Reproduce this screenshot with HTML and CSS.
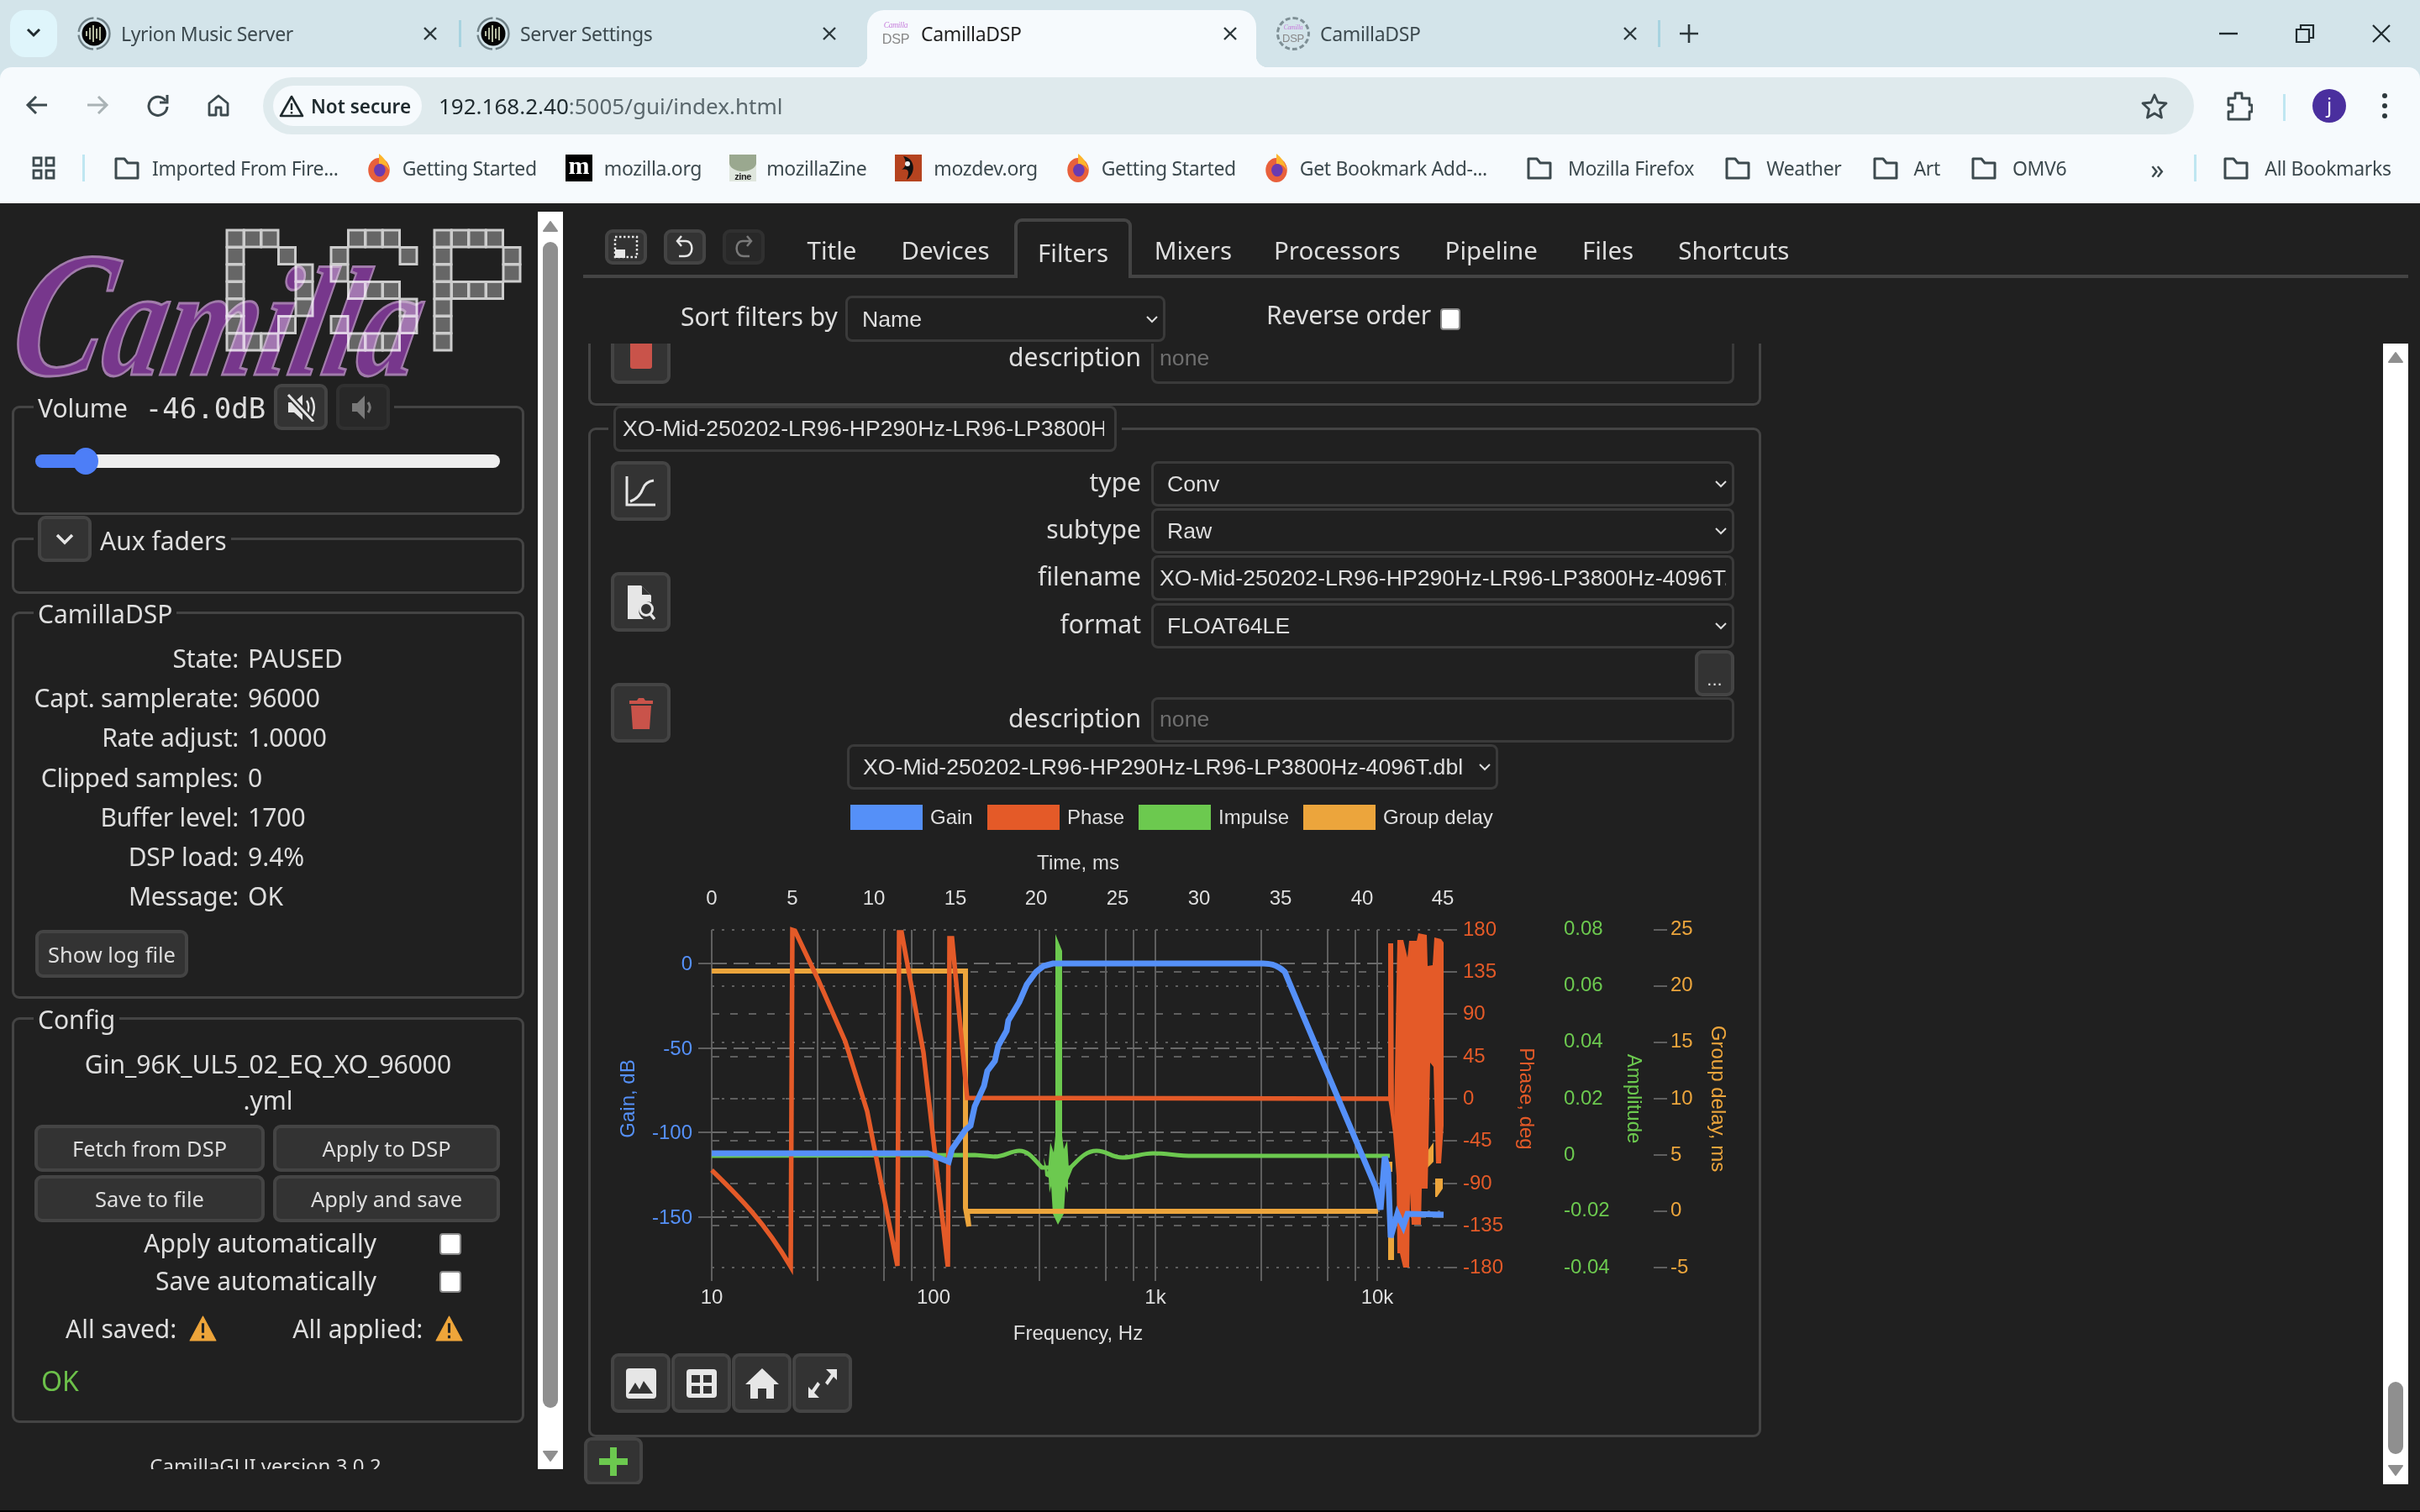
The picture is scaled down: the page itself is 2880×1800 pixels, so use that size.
FILE: index.html
```html
<!DOCTYPE html>
<html lang="en">
<head>
  <meta charset="UTF-8">
  <title>CamillaDSP</title>
  <link rel="stylesheet" href="styles.css">
</head>
<body>
  <svg class="defs" width="0" height="0">
    <symbol id="i-folder" viewBox="0 0 32 32"><path d="M3 5h10l4 5h12v18H3z" fill="none" stroke="#3d4a4f" stroke-width="3" stroke-linejoin="round"/></symbol>
    <symbol id="i-close" viewBox="0 0 20 20"><path d="M3 3l14 14M17 3L3 17" stroke="#2d383c" stroke-width="2.4"/></symbol>
    <symbol id="i-lyrion" viewBox="0 0 40 40"><circle cx="20" cy="20" r="18.5" fill="none" stroke="#6f8086" stroke-width="2.4" stroke-dasharray="26 4"/><circle cx="20" cy="20" r="14.5" fill="#050505"/><path d="M11 17v6M15 13v14M19 10v20M23 14v12M27 12v16" stroke="#dfe8c8" stroke-width="1.6"/></symbol>
    <symbol id="i-firefox" viewBox="0 0 32 40"><ellipse cx="16" cy="23" rx="15" ry="17" fill="#e8603c"/><path d="M16 0c8 6 13 14 15 24-4-8-10-10-15-10z" fill="#fdb52c"/><ellipse cx="17" cy="23" rx="8" ry="9" fill="#6a3bb0"/></symbol>
  </svg>

  <header class="chrome">
    <div class="tabstrip">
      <button class="tab-search"><svg width="18" height="12" viewBox="0 0 18 12"><path d="M2 2l7 7 7-7" fill="none" stroke="#1f2a2e" stroke-width="3"/></svg></button>
      <div class="tab">
        <svg class="fav" width="40" height="40"><use href="#i-lyrion"/></svg>
        <span class="tab-title">Lyrion Music Server</span>
        <svg class="tab-close" width="20" height="20"><use href="#i-close"/></svg>
      </div>
      <div class="tab tab-sep">
        <svg class="fav" width="40" height="40"><use href="#i-lyrion"/></svg>
        <span class="tab-title">Server Settings</span>
        <svg class="tab-close" width="20" height="20"><use href="#i-close"/></svg>
      </div>
      <div class="tab active">
        <svg class="fav" width="36" height="40" viewBox="0 0 34 42"><text x="17" y="14" text-anchor="middle" class="fav-top">Camilla</text><text x="17" y="34" text-anchor="middle" class="fav-bottom">DSP</text></svg>
        <span class="tab-title">CamillaDSP</span>
        <svg class="tab-close" width="20" height="20"><use href="#i-close"/></svg>
      </div>
      <div class="tab">
        <span class="fav fav-ring"><svg width="26" height="34" viewBox="0 0 34 42"><text x="17" y="14" text-anchor="middle" class="fav-top">Camilla</text><text x="17" y="34" text-anchor="middle" class="fav-bottom">DSP</text></svg></span>
        <span class="tab-title">CamillaDSP</span>
        <svg class="tab-close" width="20" height="20"><use href="#i-close"/></svg>
      </div>
      <span class="strip-sep"></span>
      <svg class="new-tab" width="26" height="26" viewBox="0 0 26 26"><path d="M13 2v22M2 13h22" stroke="#2d383c" stroke-width="2.6"/></svg>
      <div class="window-controls">
        <svg width="24" height="24" viewBox="0 0 24 24"><path d="M1 12h22" stroke="#1f2a2e" stroke-width="2.4"/></svg>
        <svg width="24" height="24" viewBox="0 0 24 24"><path d="M2 7h15v15H2zM7 7V2h15v15h-5" fill="none" stroke="#1f2a2e" stroke-width="2.2"/></svg>
        <svg width="24" height="24" viewBox="0 0 24 24"><path d="M2 2l20 20M22 2L2 22" stroke="#1f2a2e" stroke-width="2.2"/></svg>
      </div>
    </div>

    <div class="toolbar">
      <svg class="tool" width="28" height="28" viewBox="0 0 28 28"><path d="M26 14H3M13 4L3 14l10 10" fill="none" stroke="#3d4a4f" stroke-width="3"/></svg>
      <svg class="tool" width="28" height="28" viewBox="0 0 28 28"><path d="M2 14h23M15 4l10 10-10 10" fill="none" stroke="#a9b2b5" stroke-width="3"/></svg>
      <svg class="tool" width="28" height="28" viewBox="0 0 28 28"><path d="M23 9a11 11 0 1 0 2 7" fill="none" stroke="#3d4a4f" stroke-width="3"/><path d="M25 2v9h-9" fill="none" stroke="#3d4a4f" stroke-width="3"/></svg>
      <svg class="tool" width="28" height="28" viewBox="0 0 28 28"><path d="M3 12L14 3l11 9v14h-8v-9h-6v9H3z" fill="none" stroke="#3d4a4f" stroke-width="2.8" stroke-linejoin="round"/></svg>
      <div class="omnibox">
        <span class="chip">
          <svg width="30" height="28" viewBox="0 0 30 28"><path d="M15 3l13 23H2z" fill="none" stroke="#1f2a2e" stroke-width="2.6" stroke-linejoin="round"/><path d="M15 11v8M15 21v2.4" stroke="#1f2a2e" stroke-width="2.4"/></svg>
          <b>Not secure</b>
        </span>
        <span class="url"><span class="host">192.168.2.40</span>:5005/gui/index.html</span>
        <svg class="star" width="32" height="32" viewBox="0 0 32 32"><path d="M16 3l4 9 10 1-7.5 7 2 10-8.5-5-8.5 5 2-10L2 13l10-1z" fill="none" stroke="#3d4a4f" stroke-width="2.8" stroke-linejoin="round"/></svg>
      </div>
      <svg class="ext" width="32" height="36" viewBox="0 0 32 36"><path d="M3 9h8V3h8v6h9v8h3v8h-3v9H3v-9h5v-8H3z" fill="none" stroke="#3d4a4f" stroke-width="2.8" stroke-linejoin="round"/></svg>
      <span class="tool-sep"></span>
      <span class="avatar">j</span>
      <svg class="menu" width="8" height="32" viewBox="0 0 8 32"><circle cx="4" cy="4" r="3"/><circle cx="4" cy="16" r="3"/><circle cx="4" cy="28" r="3"/></svg>
    </div>

    <div class="bookmarks">
      <svg class="apps" width="28" height="28" viewBox="0 0 28 28"><path d="M2 2h9v9H2zM17 2h9v9h-9zM2 17h9v9H2zM17 17h9v9h-9z" fill="none" stroke="#3d4a4f" stroke-width="2.8"/></svg>
      <span class="tool-sep bm-sep"></span>
      <span class="bm"><svg width="32" height="32"><use href="#i-folder"/></svg>Imported From Fire...</span>
      <span class="bm"><svg width="28" height="34"><use href="#i-firefox"/></svg>Getting Started</span>
      <span class="bm bm-moz"><span class="fav-moz">m</span>mozilla.org</span>
      <span class="bm bm-zine"><span class="fav-zine"><i></i>zine</span>mozillaZine</span>
      <span class="bm"><svg width="32" height="32" viewBox="0 0 32 32"><rect width="32" height="32" fill="#b5431f"/><path d="M10 2c14 2 16 20 4 28 4-10 2-14-6-12 6-4 6-10 2-16z" fill="#111"/><circle cx="15" cy="11" r="3" fill="#eee"/></svg>mozdev.org</span>
      <span class="bm"><svg width="28" height="34"><use href="#i-firefox"/></svg>Getting Started</span>
      <span class="bm bm-addons"><svg width="28" height="34"><use href="#i-firefox"/></svg>Get Bookmark Add-...</span>
      <span class="bm bm-folder"><svg width="32" height="32"><use href="#i-folder"/></svg>Mozilla Firefox</span>
      <span class="bm bm-folder"><svg width="32" height="32"><use href="#i-folder"/></svg>Weather</span>
      <span class="bm bm-folder"><svg width="32" height="32"><use href="#i-folder"/></svg>Art</span>
      <span class="bm bm-folder"><svg width="32" height="32"><use href="#i-folder"/></svg>OMV6</span>
      <span class="bm-more">»</span>
      <span class="tool-sep bm-sep2"></span>
      <span class="bm bm-folder"><svg width="32" height="32"><use href="#i-folder"/></svg>All Bookmarks</span>
    </div>
  </header>

  <div class="app">
    <aside class="sidebar">
      <div class="side-scroll">
        <svg class="logo" width="626" height="215" viewBox="0 242 626 215">
          <defs><rect id="cell" width="20" height="20" fill="#666" stroke="#ccc" stroke-width="3"/></defs>
          <g transform="translate(270 274)">
            <use href="#cell" x="0" y="0"/><use href="#cell" x="20.5" y="0"/><use href="#cell" x="41" y="0"/>
            <use href="#cell" x="0" y="20.5"/><use href="#cell" x="61.5" y="20.5"/>
            <use href="#cell" x="0" y="41"/><use href="#cell" x="82" y="41"/>
            <use href="#cell" x="0" y="61.5"/><use href="#cell" x="82" y="61.5"/>
            <use href="#cell" x="0" y="82"/><use href="#cell" x="82" y="82"/>
            <use href="#cell" x="0" y="102.5"/><use href="#cell" x="61.5" y="102.5"/>
            <use href="#cell" x="0" y="123"/><use href="#cell" x="20.5" y="123"/><use href="#cell" x="41" y="123"/>
          </g>
          <g transform="translate(394 274)">
            <use href="#cell" x="20.5" y="0"/><use href="#cell" x="41" y="0"/><use href="#cell" x="61.5" y="0"/>
            <use href="#cell" x="0" y="20.5"/><use href="#cell" x="82" y="20.5"/>
            <use href="#cell" x="0" y="41"/>
            <use href="#cell" x="20.5" y="61.5"/><use href="#cell" x="41" y="61.5"/><use href="#cell" x="61.5" y="61.5"/>
            <use href="#cell" x="82" y="82"/>
            <use href="#cell" x="0" y="102.5"/><use href="#cell" x="82" y="102.5"/>
            <use href="#cell" x="20.5" y="123"/><use href="#cell" x="41" y="123"/><use href="#cell" x="61.5" y="123"/>
          </g>
          <g transform="translate(517 274)">
            <use href="#cell" x="0" y="0"/><use href="#cell" x="20.5" y="0"/><use href="#cell" x="41" y="0"/><use href="#cell" x="61.5" y="0"/>
            <use href="#cell" x="0" y="20.5"/><use href="#cell" x="82" y="20.5"/>
            <use href="#cell" x="0" y="41"/><use href="#cell" x="82" y="41"/>
            <use href="#cell" x="0" y="61.5"/><use href="#cell" x="20.5" y="61.5"/><use href="#cell" x="41" y="61.5"/><use href="#cell" x="61.5" y="61.5"/>
            <use href="#cell" x="0" y="82"/>
            <use href="#cell" x="0" y="102.5"/>
            <use href="#cell" x="0" y="123"/>
          </g>
          <text class="logo-script" transform="translate(95 0) skewX(-12)" x="6" y="446" textLength="484" lengthAdjust="spacingAndGlyphs"><tspan class="logo-cap">C</tspan>amilla</text>
        </svg>

        <fieldset class="box box-volume">
          <legend class="legend-row">
            <span>Volume</span><span class="vol-value">-46.0dB</span>
            <button class="btn btn-icon-sm"><svg width="36" height="34" viewBox="0 0 36 34"><path d="M3 11h7l10-9v30L10 23H3z" fill="#e6e6e6"/><path d="M25 9c3 4 3 12 0 16M30 5c5 7 5 17 0 24" fill="none" stroke="#e6e6e6" stroke-width="2.5"/><path d="M4 3l28 30" stroke="#333" stroke-width="7"/><path d="M3 2l30 32" stroke="#e6e6e6" stroke-width="3"/></svg></button>
            <button class="btn btn-icon-sm btn-off"><svg width="30" height="32" viewBox="0 0 30 32"><path d="M2 11h6l9-9v28l-9-9H2z" fill="#e6e6e6"/><path d="M21 10c3 4 3 8 0 12" fill="none" stroke="#e6e6e6" stroke-width="3"/></svg></button>
          </legend>
          <input class="volume" type="range" min="-150" max="0" value="-137">
        </fieldset>

        <fieldset class="box box-aux">
          <legend class="legend-row">
            <button class="btn btn-icon-sm"><svg width="22" height="14" viewBox="0 0 22 14"><path d="M2 2l9 9 9-9" fill="none" stroke="#e6e6e6" stroke-width="3.5"/></svg></button>
            <span class="aux-label">Aux faders</span>
          </legend>
        </fieldset>

        <fieldset class="box box-status">
          <legend>CamillaDSP</legend>
          <div class="status-row"><span class="status-label">State:</span><span>PAUSED</span></div>
          <div class="status-row"><span class="status-label">Capt. samplerate:</span><span>96000</span></div>
          <div class="status-row"><span class="status-label">Rate adjust:</span><span>1.0000</span></div>
          <div class="status-row"><span class="status-label">Clipped samples:</span><span>0</span></div>
          <div class="status-row"><span class="status-label">Buffer level:</span><span>1700</span></div>
          <div class="status-row"><span class="status-label">DSP load:</span><span>9.4%</span></div>
          <div class="status-row"><span class="status-label">Message:</span><span>OK</span></div>
          <button class="btn btn-log">Show log file</button>
        </fieldset>

        <fieldset class="box box-config">
          <legend>Config</legend>
          <div class="config-name">Gin_96K_UL5_02_EQ_XO_96000<br>.yml</div>
          <div class="config-buttons">
            <button class="btn">Fetch from DSP</button>
            <button class="btn">Apply to DSP</button>
            <button class="btn">Save to file</button>
            <button class="btn">Apply and save</button>
          </div>
          <div class="auto-row"><span>Apply automatically</span><input type="checkbox"></div>
          <div class="auto-row"><span>Save automatically</span><input type="checkbox"></div>
          <div class="saved-row">
            <span>All saved:</span>
            <svg width="33" height="31" viewBox="0 0 32 30"><path d="M16 1L31 29H1z" fill="#eea53a" stroke="#eea53a" stroke-linejoin="round"/><path d="M16 9v11M16 23v3.5" stroke="#222" stroke-width="3"/></svg>
            <span class="saved-gap">All applied:</span>
            <svg width="33" height="31" viewBox="0 0 32 30"><path d="M16 1L31 29H1z" fill="#eea53a" stroke="#eea53a" stroke-linejoin="round"/><path d="M16 9v11M16 23v3.5" stroke="#222" stroke-width="3"/></svg>
          </div>
          <div class="config-ok">OK</div>
        </fieldset>

        <div class="version">CamillaGUI version 3.0.2</div>
      </div>
      <div class="scrollbar side-bar">
        <svg class="sb-up" width="18" height="14" viewBox="0 0 18 14"><path d="M9 2L1 13h16z" fill="#8f8f8f" stroke="#8f8f8f" stroke-width="2" stroke-linejoin="round"/></svg>
        <div class="sb-thumb side-thumb"></div>
        <svg class="sb-down" width="18" height="14" viewBox="0 0 18 14"><path d="M9 12L1 1h16z" fill="#8f8f8f" stroke="#8f8f8f" stroke-width="2" stroke-linejoin="round"/></svg>
      </div>
    </aside>

    <main class="main">
      <nav class="tabs">
        <button class="btn btn-tiny"><svg width="30" height="30" viewBox="0 0 30 30"><path d="M2 3h26v24H2z" fill="none" stroke="#e6e6e6" stroke-width="2.5" stroke-dasharray="2.5 2.5"/><path d="M2 18h12v10H2z" fill="#e6e6e6"/></svg></button>
        <button class="btn btn-tiny"><svg width="22" height="28" viewBox="0 0 22 28"><path d="M7 1L2 7l5 6" fill="none" stroke="#e6e6e6" stroke-width="2.5"/><path d="M3 7h9c10 0 10 18-1 18H4" fill="none" stroke="#e6e6e6" stroke-width="2.5"/></svg></button>
        <button class="btn btn-tiny btn-off"><svg width="22" height="28" viewBox="0 0 22 28"><path d="M15 1l5 6-5 6" fill="none" stroke="#e6e6e6" stroke-width="2.5"/><path d="M19 7h-9C0 7 0 25 11 25h7" fill="none" stroke="#e6e6e6" stroke-width="2.5"/></svg></button>
        <a class="tab-link tab-first">Title</a>
        <a class="tab-link">Devices</a>
        <a class="tab-link tab-current">Filters</a>
        <a class="tab-link">Mixers</a>
        <a class="tab-link">Processors</a>
        <a class="tab-link">Pipeline</a>
        <a class="tab-link">Files</a>
        <a class="tab-link">Shortcuts</a>
      </nav>

      <div class="sort-row">
        <span class="sort-label">Sort filters by</span>
        <select class="field sort-select"><option>Name</option></select>
        <span class="reverse-label">Reverse order</span>
        <input class="reverse-check" type="checkbox">
      </div>

      <div class="content">
        <div class="filter-list">
          <div class="filter-tail">
            <button class="btn btn-square tail-trash"><svg width="26" height="40" viewBox="0 0 26 40"><rect y="0" width="26" height="40" rx="3" fill="#c9534a"/></svg></button>
            <label class="row-label tail-label">description</label>
            <input class="field tail-input" placeholder="none">
          </div>

          <fieldset class="filter">
            <legend><input class="field filter-name" value="XO-Mid-250202-LR96-HP290Hz-LR96-LP3800Hz-4096T"></legend>
            <div class="filter-top">
              <div class="filter-tools">
                <button class="btn btn-square"><svg width="38" height="38" viewBox="0 0 38 38"><path d="M2 1v34h34" fill="none" stroke="#e6e6e6" stroke-width="3"/><path d="M6 31C14 28 18 24 21 16c2-6 6-9 13-10" fill="none" stroke="#e6e6e6" stroke-width="3"/></svg></button>
                <button class="btn btn-square"><svg width="34" height="42" viewBox="0 0 34 42"><path d="M1 1h16l12 12v8a11 11 0 0 0-9 20H1z" fill="#e6e6e6"/><path d="M18 2l10 10H18z" fill="#333"/><circle cx="23" cy="29" r="7.5" fill="none" stroke="#e6e6e6" stroke-width="3"/><path d="M28 35l5 6" stroke="#e6e6e6" stroke-width="3.5"/></svg></button>
                <button class="btn btn-square"><svg width="30" height="38" viewBox="0 0 30 38"><path d="M1 4h9l2-3h6l2 3h9v4H1zM3 10h24l-2 28H5z" fill="#c9534a"/></svg></button>
              </div>
              <div class="filter-form">
                <div class="row"><label class="row-label">type</label><select class="field"><option>Conv</option></select></div>
                <div class="row"><label class="row-label">subtype</label><select class="field"><option>Raw</option></select></div>
                <div class="row"><label class="row-label">filename</label><input class="field" value="XO-Mid-250202-LR96-HP290Hz-LR96-LP3800Hz-4096T.dbl"></div>
                <div class="row"><label class="row-label">format</label><select class="field"><option>FLOAT64LE</option></select></div>
                <div class="row row-more"><button class="btn btn-more">...</button></div>
                <div class="row"><label class="row-label">description</label><input class="field" placeholder="none"></div>
              </div>
            </div>

            <select class="field file-select"><option>XO-Mid-250202-LR96-HP290Hz-LR96-LP3800Hz-4096T.dbl</option></select>

            <svg class="chart" width="1370" height="660" viewBox="720 944 1370 660">
              <!-- legend -->
              <rect x="1012" y="958" width="86" height="30" fill="#5590f8"/><text x="1107" y="981">Gain</text>
              <rect x="1175" y="958" width="86" height="30" fill="#e45a28"/><text x="1270" y="981">Phase</text>
              <rect x="1355" y="958" width="86" height="30" fill="#6cc94f"/><text x="1450" y="981">Impulse</text>
              <rect x="1551" y="958" width="86" height="30" fill="#eca53c"/><text x="1646" y="981">Group delay</text>

              <text x="1283" y="1035" text-anchor="middle">Time, ms</text>
              <g text-anchor="middle">
                <text x="847" y="1077">0</text><text x="943" y="1077">5</text><text x="1040" y="1077">10</text><text x="1137" y="1077">15</text><text x="1233" y="1077">20</text>
                <text x="1330" y="1077">25</text><text x="1427" y="1077">30</text><text x="1524" y="1077">35</text><text x="1621" y="1077">40</text><text x="1717" y="1077">45</text>
                <text x="847" y="1552">10</text><text x="1111" y="1552">100</text><text x="1375" y="1552">1k</text><text x="1639" y="1552">10k</text>
                <text x="1283" y="1595">Frequency, Hz</text>
              </g>

              <!-- grid -->
              <path class="grid" d="M847 1107V1525M973 1107V1525M1052 1107V1525M1085 1107V1525M1111 1107V1525M1237 1107V1525M1316 1107V1525M1349 1107V1525M1375 1107V1525M1501 1107V1525M1580 1107V1525M1613 1107V1525M1639 1107V1525"/>
              <path class="grid grid-gain" d="M847 1147H1718M847 1248H1718M847 1348H1718M847 1449H1718"/>
              <path class="grid grid-phase" d="M847 1157H1718M847 1207H1718M847 1258H1718M847 1308H1718M847 1358H1718M847 1409H1718M847 1459H1718"/>
              <path class="grid grid-delay" d="M847 1107H1718M847 1174H1718M847 1241H1718M847 1308H1718M847 1375H1718M847 1442H1718M847 1509H1718"/>
              <path class="grid" d="M831 1147H847M831 1248H847M831 1348H847M831 1449H847"/>
              <path class="grid" d="M1718 1107H1734M1718 1157H1734M1718 1207H1734M1718 1258H1734M1718 1308H1734M1718 1358H1734M1718 1409H1734M1718 1459H1734M1718 1509H1734"/>
              <path class="grid" d="M1968 1107H1984M1968 1174H1984M1968 1241H1984M1968 1308H1984M1968 1375H1984M1968 1442H1984M1968 1509H1984"/>

              <!-- curves -->
              <path class="curve c-impulse" d="M847 1376L1160 1375L1184 1377C1195 1377 1203 1370 1213 1370C1225 1370 1232 1382 1240 1390L1274 1390C1284 1380 1292 1370 1305 1370C1318 1370 1322 1378 1336 1378C1350 1378 1358 1373 1372 1373C1390 1373 1400 1376 1420 1376L1654 1376"/>
              <path class="burst" d="M1256 1112L1264 1132V1352L1266 1368L1270 1358L1272 1392L1277 1390L1271 1405L1271 1420L1268 1412L1266 1445L1259 1458L1253 1445L1251 1412L1249 1420L1248 1402L1244 1400L1242 1378L1247 1395L1250 1360L1254 1372L1256 1352Z"/>
              <path class="curve c-delay" d="M847 1156H1149V1438L1153 1460L1151 1442H1640"/>
              <path class="curve c-phase" d="M847 1393C880 1425 910 1455 941 1508L943 1107L946 1108L974 1167L1006 1240L1032 1323L1068 1507L1070 1110L1073 1110L1099 1253L1128 1508L1130 1117L1133 1117L1151 1307L1654 1308"/>
              <path class="delay-noise" d="M1652 1470H1659V1500H1652ZM1652 1383H1657V1395H1652ZM1699 1370L1706 1360V1383L1699 1390ZM1708 1403H1717V1415L1710 1425H1708Z"/>
              <path class="phase-noise" d="M1652 1123H1658L1659 1330L1663 1119H1670L1675 1140L1677 1120H1686L1688 1111L1698 1113L1699 1150L1705 1149L1707 1116L1715 1118L1718 1122V1340L1715 1385L1709 1385L1706 1270L1702 1265L1699 1415H1692L1691 1458H1680L1678 1420L1677 1509H1670L1666 1492H1663L1662 1400L1658 1350L1654 1320L1652 1308Z"/>
              <path class="curve c-gain" d="M847 1373H1104L1129 1383L1133 1368L1149 1345L1155 1340L1160 1317L1171 1293L1175 1275L1184 1263L1188 1245L1198 1227L1200 1215L1213 1193L1222 1172L1233 1157L1242 1150L1253 1147H1503C1515 1147 1522 1150 1529 1157L1547 1200L1637 1413L1643 1440L1648 1377L1652 1393L1655 1473L1663 1445L1670 1460L1675 1445L1718 1446"/>

              <!-- axis labels -->
              <g class="t-gain" text-anchor="end">
                <text x="824" y="1155">0</text><text x="824" y="1256">-50</text><text x="824" y="1356">-100</text><text x="824" y="1457">-150</text>
              </g>
              <g class="t-phase">
                <text x="1741" y="1114">180</text><text x="1741" y="1164">135</text><text x="1741" y="1214">90</text><text x="1741" y="1265">45</text><text x="1741" y="1315">0</text>
                <text x="1741" y="1365">-45</text><text x="1741" y="1416">-90</text><text x="1741" y="1466">-135</text><text x="1741" y="1516">-180</text>
              </g>
              <g class="t-impulse">
                <text x="1861" y="1113">0.08</text><text x="1861" y="1180">0.06</text><text x="1861" y="1247">0.04</text><text x="1861" y="1315">0.02</text><text x="1861" y="1382">0</text>
                <text x="1861" y="1448">-0.02</text><text x="1861" y="1516">-0.04</text>
              </g>
              <g class="t-delay">
                <text x="1988" y="1113">25</text><text x="1988" y="1180">20</text><text x="1988" y="1247">15</text><text x="1988" y="1315">10</text><text x="1988" y="1382">5</text>
                <text x="1988" y="1448">0</text><text x="1988" y="1516">-5</text>
              </g>
              <g text-anchor="middle">
                <text class="t-gain" transform="translate(755 1308) rotate(-90)">Gain, dB</text>
                <text class="t-phase" transform="translate(1809 1308) rotate(90)">Phase, deg</text>
                <text class="t-impulse" transform="translate(1937 1308) rotate(90)">Amplitude</text>
                <text class="t-delay" transform="translate(2037 1308) rotate(90)">Group delay, ms</text>
              </g>
            </svg>

            <div class="chart-tools">
              <button class="btn btn-square"><svg width="36" height="36" viewBox="0 0 36 36"><rect width="36" height="36" rx="4" fill="#e6e6e6"/><path d="M3 30l8-13 5 8 5-10 11 15z" fill="#333"/></svg></button>
              <button class="btn btn-square"><svg width="36" height="34" viewBox="0 0 36 34"><rect width="36" height="34" rx="4" fill="#e6e6e6"/><path d="M6 7h10v9H6zM20 7h10v9H20zM6 20h10v9H6zM20 20h10v9H20z" fill="#333"/></svg></button>
              <button class="btn btn-square"><svg width="40" height="36" viewBox="0 0 40 36"><path d="M20 0l20 19h-6v17h-9V24h-10v12H6V19H0z" fill="#e6e6e6"/></svg></button>
              <button class="btn btn-square"><svg width="36" height="36" viewBox="0 0 36 36"><path d="M22 1h13v13l-4-4-7 10-3-3 7-10zM14 35H1V22l4 4 7-10 3 3-7 10z" fill="#e6e6e6"/></svg></button>
            </div>
          </fieldset>

          <button class="btn btn-square btn-add"><svg width="34" height="34" viewBox="0 0 34 34"><path d="M13 0h8v13h13v8H21v13h-8V21H0v-8h13z" fill="#6cc94f"/></svg></button>
        </div>

        <div class="scrollbar main-bar">
          <svg class="sb-up" width="18" height="14" viewBox="0 0 18 14"><path d="M9 2L1 13h16z" fill="#8f8f8f" stroke="#8f8f8f" stroke-width="2" stroke-linejoin="round"/></svg>
          <div class="sb-thumb main-thumb"></div>
          <svg class="sb-down" width="18" height="14" viewBox="0 0 18 14"><path d="M9 12L1 1h16z" fill="#8f8f8f" stroke="#8f8f8f" stroke-width="2" stroke-linejoin="round"/></svg>
        </div>
      </div>
    </main>
  </div>
  <div class="bottom-line"></div>
</body>
</html>
```

FILE: styles.css
```css
* {
  box-sizing: border-box;
}
html, body {
  margin: 0;
  height: 1800px;
  overflow: hidden;
}
body {
  background: #202020;
  color: #dedede;
  font-family: "Noto Sans", sans-serif;
  font-size: 30px;
}
.defs {
  position: absolute;
}

/* browser chrome */
.chrome {
  height: 242px;
  background: #d3e4ea;
  color: #3d4a4f;
  font-size: 23px;
  letter-spacing: -0.35px;
}
.tabstrip {
  height: 80px;
  padding-top: 12px;
  display: flex;
  align-items: flex-start;
}
.tab-search {
  width: 56px;
  height: 56px;
  margin: 0 4px 0 12px;
  border: none;
  border-radius: 18px;
  background: #dff5fb;
}
.tab {
  width: 475px;
  height: 68px;
  padding: 8px 25px 8px 20px;
  display: flex;
  align-items: flex-start;
  position: relative;
}
.tab .fav {
  flex: none;
  margin-right: 12px;
}
.fav-top {
  font: italic 10px "Liberation Serif", serif;
  fill: #c77fdc;
}
.fav-bottom {
  font: 17px "Liberation Sans", sans-serif;
  fill: #888;
}
.fav-ring {
  width: 40px;
  height: 40px;
  border: 3px dashed #7e8f95;
  border-radius: 50%;
  display: flex;
  align-items: center;
  justify-content: center;
}
.tab-title {
  flex: 1;
  line-height: 40px;
  white-space: nowrap;
}
.tab-close {
  flex: none;
  margin-top: 10px;
}
.tab-sep::before {
  content: "";
  position: absolute;
  left: -1px;
  top: 12px;
  width: 3px;
  height: 32px;
  background: #a7d3e0;
}
.tab.active {
  background: #f6fafd;
  color: #1f1f1f;
  margin: 0 6px 0 10px;
  width: 463px;
  padding-left: 16px;
  padding-right: 21px;
  border-radius: 20px 20px 0 0;
}
.tab.active::before, .tab.active::after {
  content: "";
  position: absolute;
  bottom: 0;
  width: 14px;
  height: 14px;
}
.tab.active::before {
  left: -14px;
  background: radial-gradient(circle at 0 0, transparent 14px, #f6fafd 14.5px);
}
.tab.active::after {
  right: -14px;
  background: radial-gradient(circle at 100% 0, transparent 14px, #f6fafd 14.5px);
}
.tab.active + .tab {
  padding-left: 18px;
  padding-right: 26px;
}
.strip-sep {
  width: 3px;
  height: 32px;
  margin: 12px 0 0 -3px;
  background: #a7d3e0;
}
.new-tab {
  margin: 15px 0 0 21px;
}
.window-controls {
  margin: 16px 34px 0 auto;
  display: flex;
  gap: 67px;
}
.toolbar {
  height: 80px;
  padding: 12px 0 0 30px;
  background: #f6fafd;
  border-radius: 14px 14px 0 0;
  display: flex;
  align-items: flex-start;
}
.tool {
  margin: 19px 44px 0 0;
  flex: none;
}
.omnibox {
  width: 2298px;
  height: 68px;
  margin-left: -5px;
  padding-left: 12px;
  background: #dfeaed;
  border-radius: 34px;
  display: flex;
  align-items: center;
  font-size: 26px;
  letter-spacing: 0;
}
.chip {
  width: 177px;
  height: 48px;
  padding-left: 7px;
  background: #f6fafd;
  border-radius: 24px;
  display: flex;
  align-items: center;
  gap: 8px;
  color: #1f2a2e;
  font-size: 22.5px;
}
.chip b {
  font-weight: 600;
}
.url {
  margin-left: 20px;
  color: #5a676c;
}
.host {
  color: #1f2a2e;
}
.star {
  margin-left: auto;
  margin-right: 31px;
}
.ext {
  margin: 16px 0 0 38px;
  flex: none;
}
.tool-sep {
  width: 3px;
  height: 32px;
  background: #bfe6f1;
  flex: none;
}
.toolbar .tool-sep {
  margin: 20px 0 0 36px;
}
.avatar {
  width: 40px;
  height: 40px;
  margin: 14px 0 0 32px;
  border-radius: 50%;
  background: #4a2f9e;
  color: #fff;
  text-align: center;
  line-height: 38px;
  font-size: 24px;
  flex: none;
}
.menu {
  margin: 18px 0 0 42px;
  fill: #2d383c;
  flex: none;
}
.bookmarks {
  height: 82px;
  padding: 0 0 2px 38px;
  background: #f6fafd;
  display: flex;
  align-items: center;
}
.apps {
  flex: none;
}
.bm-sep {
  margin: 0 34px 0 32px;
}
.bm {
  display: flex;
  align-items: center;
  gap: 14px;
  margin-right: 34px;
  white-space: nowrap;
  flex: none;
}
.bm svg, .bm > span {
  flex: none;
}
.bm-moz {
  margin-right: 33px;
}
.bm-zine {
  gap: 12px;
}
.bm-addons {
  margin-right: 46px;
}
.bm-folder {
  gap: 18px;
  margin-right: 36px;
}
.fav-moz {
  width: 32px;
  height: 32px;
  background: #000;
  color: #fff;
  font: bold 30px/26px "Liberation Serif", serif;
  text-align: center;
}
.fav-zine {
  width: 32px;
  height: 32px;
  background: #dfe6dd;
  color: #222;
  font: bold 11px/12px "Liberation Sans", sans-serif;
  text-align: center;
  display: flex;
  flex-direction: column;
  justify-content: flex-end;
}
.fav-zine i {
  flex: 1;
  background: #9aa88f;
  border-radius: 0 0 60% 60%;
}
.bm-more {
  margin-left: 64px;
  font-size: 32px;
  color: #3d4a4f;
}
.bm-sep2 {
  margin: 0 31px 0 36px;
}

/* app */
.app {
  height: 1556px;
  display: flex;
}
.sidebar {
  width: 694px;
  flex: none;
  display: flex;
  align-items: flex-start;
}
.side-scroll {
  width: 640px;
  height: 1507px;
  padding-left: 14px;
  overflow: hidden;
}
.logo {
  display: block;
  margin-left: -14px;
  overflow: visible;
}
.logo-script {
  font: italic bold 185px "Liberation Serif", serif;
  fill: #641a7c;
  stroke: #94689f;
  stroke-width: 3px;
  mix-blend-mode: screen;
}
.logo-cap {
  font-size: 212px;
}
.box {
  width: 610px;
  margin: 0;
  padding: 0 24px;
  border: 3px solid #444;
  border-radius: 9px;
}
.box legend {
  padding: 4px 5px 0;
  margin-left: -1px;
  line-height: 38px;
  white-space: nowrap;
}
.box legend.legend-row {
  padding-top: 0;
  display: flex;
  align-items: center;
}
.legend-row > span {
  margin-top: 3px;
}
.vol-value {
  margin: 0 10px 0 21px;
  font-family: "DejaVu Sans Mono", monospace;
  font-size: 34px;
}
.btn {
  height: 56px;
  background: #333;
  border: 4px solid #444;
  border-radius: 9px;
  color: #dedede;
  font-family: "Noto Sans", sans-serif;
  font-size: 25.5px;
  padding: 0;
  display: inline-flex;
  align-items: center;
  justify-content: center;
}
.btn-off {
  opacity: 0.45;
}
.btn-icon-sm {
  width: 64px;
  height: 55px;
  flex: none;
}
.btn-icon-sm + .btn-icon-sm {
  margin-left: 10px;
}
.box-volume {
  height: 156px;
}
.volume {
  display: block;
  width: 553px;
  height: 32px;
  margin: 21px 0 0 1px;
  appearance: none;
  background: transparent;
}
.volume::-webkit-slider-runnable-track {
  height: 16px;
  border-radius: 8px;
  background: linear-gradient(90deg, #4d7ef7 0 62px, #eee 62px);
}
.volume::-webkit-slider-thumb {
  appearance: none;
  width: 30px;
  height: 32px;
  margin-top: -8px;
  border-radius: 50%;
  background: #4d7ef7;
}
.box-aux {
  height: 93px;
  margin-top: 1px;
}
.legend-row > .aux-label {
  margin: 5px 0 0 10px;
}
.box-status {
  height: 481px;
  margin-top: 1px;
}
.status-row {
  height: 47.2px;
  display: flex;
  align-items: center;
  white-space: nowrap;
}
.box-status legend + .status-row {
  margin-top: 10px;
}
.status-label {
  width: 243px;
  margin-right: 11px;
  flex: none;
  display: flex;
  justify-content: flex-end;
  letter-spacing: -0.25px;
}
.btn-log {
  width: 182px;
  height: 57px;
  margin: 17px 0 0 1px;
}
.box-config {
  height: 503px;
  margin-top: 2px;
}
.config-name {
  margin-top: 12px;
  line-height: 43px;
  text-align: center;
}
.config-buttons {
  margin-top: 8px;
  display: grid;
  grid-template-columns: 274px 270px;
  column-gap: 10px;
  row-gap: 4px;
}
.auto-row {
  height: 45px;
  display: flex;
  align-items: center;
  justify-content: flex-end;
  padding-right: 48px;
}
.config-buttons + .auto-row {
  margin-top: 2px;
}
.auto-row input, .reverse-check {
  appearance: none;
  width: 26px;
  height: 26px;
  margin: 3px 0 0 75px;
  background: #fff;
  border: 2px solid #8a8a8a;
  border-radius: 4px;
}
.saved-row {
  height: 50px;
  margin-top: 9px;
  padding-left: 37px;
  display: flex;
  align-items: center;
  gap: 15px;
}
.saved-gap {
  margin-left: 75px;
}
.config-ok {
  margin: 17px 0 0 8px;
  line-height: 42px;
  font-size: 32px;
  color: #6cc04a;
}
.version {
  width: 604px;
  margin-top: 34px;
  text-align: center;
  font-size: 24px;
}

/* scrollbars */
.scrollbar {
  width: 30px;
  flex: none;
  background: #fff;
  display: flex;
  flex-direction: column;
  align-items: center;
}
.sb-thumb {
  width: 18px;
  background: #8f8f8f;
  border-radius: 9px;
}
.sb-up, .sb-down {
  flex: none;
}
.side-bar {
  height: 1497px;
  margin-top: 10px;
  padding-top: 10px;
}
.side-thumb {
  height: 1388px;
  margin: 12px 0 51px;
}
.main-bar {
  height: 1358px;
  padding-top: 9px;
}
.main-thumb {
  height: 86px;
  margin: 1213px 0 13px;
}

/* main column */
.main {
  flex: 1;
  min-width: 0;
  display: flex;
  flex-direction: column;
}
.tabs {
  height: 71px;
  margin: 18px 14px 0 0;
  padding-left: 26px;
  border-bottom: 4px solid #444;
  display: flex;
  align-items: flex-start;
}
.btn-tiny {
  width: 50px;
  height: 42px;
  margin: 13px 20px 0 0;
}
.tab-link {
  padding: 0 26.5px;
  line-height: 76px;
  font-size: 29.5px;
  white-space: nowrap;
}
.tab-first {
  margin-left: 4px;
}
.tab-current {
  height: 71px;
  margin-left: 3px;
  padding: 1px 24px 0;
  border: 4px solid #444;
  border-bottom: none;
  border-radius: 9px 9px 0 0;
  background: #202020;
  line-height: 72px;
}
.tab-current + .tab-link {
  margin-right: -3px;
}
.sort-row {
  height: 78px;
  padding: 21px 0 0 116px;
  display: flex;
  align-items: flex-start;
}
.sort-label {
  margin-top: 4px;
  line-height: 42px;
}
.field {
  height: 54px;
  background-color: transparent;
  border: 3px solid #3a3a3a;
  border-radius: 8px;
  color: #dedede;
  font-family: "Liberation Sans", sans-serif;
  font-size: 26.67px;
  outline: none;
}
select.field {
  appearance: none;
  padding-left: 16px;
  background-image: url("data:image/svg+xml,%3Csvg xmlns='http://www.w3.org/2000/svg' width='16' height='10'%3E%3Cpath d='M2 2l6 6 6-6' fill='none' stroke='%23ddd' stroke-width='2'/%3E%3C/svg%3E");
  background-repeat: no-repeat;
  background-position: right 5px center;
}
input.field {
  padding: 0 7px;
}
.field::placeholder {
  color: #6e6e6e;
  opacity: 1;
}
.sort-select {
  width: 381px;
  height: 55px;
  margin-left: 9px;
}
select.sort-select {
  padding-left: 17px;
}
.reverse-label {
  margin-left: 120px;
  margin-top: 2px;
  line-height: 42px;
}
.reverse-check {
  margin: 15px 0 0 11px;
  width: 24px;
}
.content {
  flex: 1;
  display: flex;
  padding-right: 14px;
  height: 1358px;
}
.filter-list {
  flex: 1;
  min-width: 0;
  height: 1358px;
  overflow: hidden;
}
.filter-tail {
  width: 1396px;
  height: 74px;
  margin-left: 6px;
  padding: 0 29px 23px 24px;
  border: 3px solid #444;
  border-top: none;
  border-radius: 0 0 9px 9px;
  display: flex;
  align-items: flex-end;
}
.btn-square {
  width: 71px;
  height: 71px;
  flex: none;
}
.tail-trash {
  align-items: flex-end;
  padding-bottom: 14px;
}
.row-label {
  text-align: right;
  white-space: nowrap;
}
.tail-label {
  width: 572px;
  flex: none;
  line-height: 44px;
  padding: 0 12px 10px 0;
}
.tail-input {
  width: 694px;
  border-top: none;
  border-radius: 0 0 8px 8px;
}
input.tail-input {
  padding-bottom: 5px;
}
.filter {
  width: 1396px;
  min-width: 0;
  height: 1228px;
  margin: 0 0 0 6px;
  padding: 0 29px 0 24px;
  border: 3px solid #444;
  border-radius: 9px;
}
.filter legend {
  padding: 0 6px;
  margin-left: -3px;
}
input.filter-name {
  display: block;
  width: 599px;
  height: 55px;
  padding: 0 12px 0 8px;
}
.filter-top {
  margin-top: 11px;
  display: flex;
  height: 337px;
}
.filter-tools {
  width: 71px;
  flex: none;
  display: flex;
  flex-direction: column;
  gap: 61px;
}
.filter-form {
  width: 1266px;
  flex: none;
}
.row {
  height: 56.2px;
  display: flex;
}
.row .row-label {
  width: 572px;
  flex: none;
  padding-right: 12px;
  line-height: 50px;
}
.row .field {
  width: 694px;
}
.row-more {
  justify-content: flex-end;
}
.btn-more {
  width: 47px;
  height: 55px;
  padding-top: 16px;
  font: 22px "Liberation Sans", sans-serif;
}
.file-select {
  display: block;
  width: 775px;
  margin-left: 281px;
  background-position: right 6px center;
}
.chart {
  display: block;
  margin: 4px 0 0 -7px;
  font: 24px "Liberation Sans", sans-serif;
  fill: #dedede;
}
.grid {
  fill: none;
  stroke: #5f5f5f;
  stroke-width: 2;
}
.grid-gain {
  stroke: #6a6a6a;
  stroke-dasharray: 18 8;
}
.grid-phase {
  stroke-dasharray: 9 13;
}
.grid-delay {
  stroke-dasharray: 3 9;
}
.curve {
  fill: none;
  stroke-linejoin: miter;
}
.c-gain {
  stroke: #5590f8;
  stroke-width: 7;
}
.c-phase {
  stroke: #e45a28;
  stroke-width: 5.5;
}
.c-delay {
  stroke: #eca53c;
  stroke-width: 6;
}
.c-impulse {
  stroke: #6cc94f;
  stroke-width: 5;
}
.burst {
  fill: #6cc94f;
}
.phase-noise {
  fill: #e45a28;
}
.delay-noise {
  fill: #eca53c;
}
.t-gain {
  fill: #5590f8;
}
.t-phase {
  fill: #e45a28;
}
.t-impulse {
  fill: #6cc94f;
}
.t-delay {
  fill: #eca53c;
}
.chart-tools {
  margin-top: 7px;
  display: flex;
  gap: 1px;
}
.btn-add {
  width: 70px;
  height: 57px;
  margin-left: 1px;
}
.bottom-line {
  height: 2px;
  background: #000;
}
```
